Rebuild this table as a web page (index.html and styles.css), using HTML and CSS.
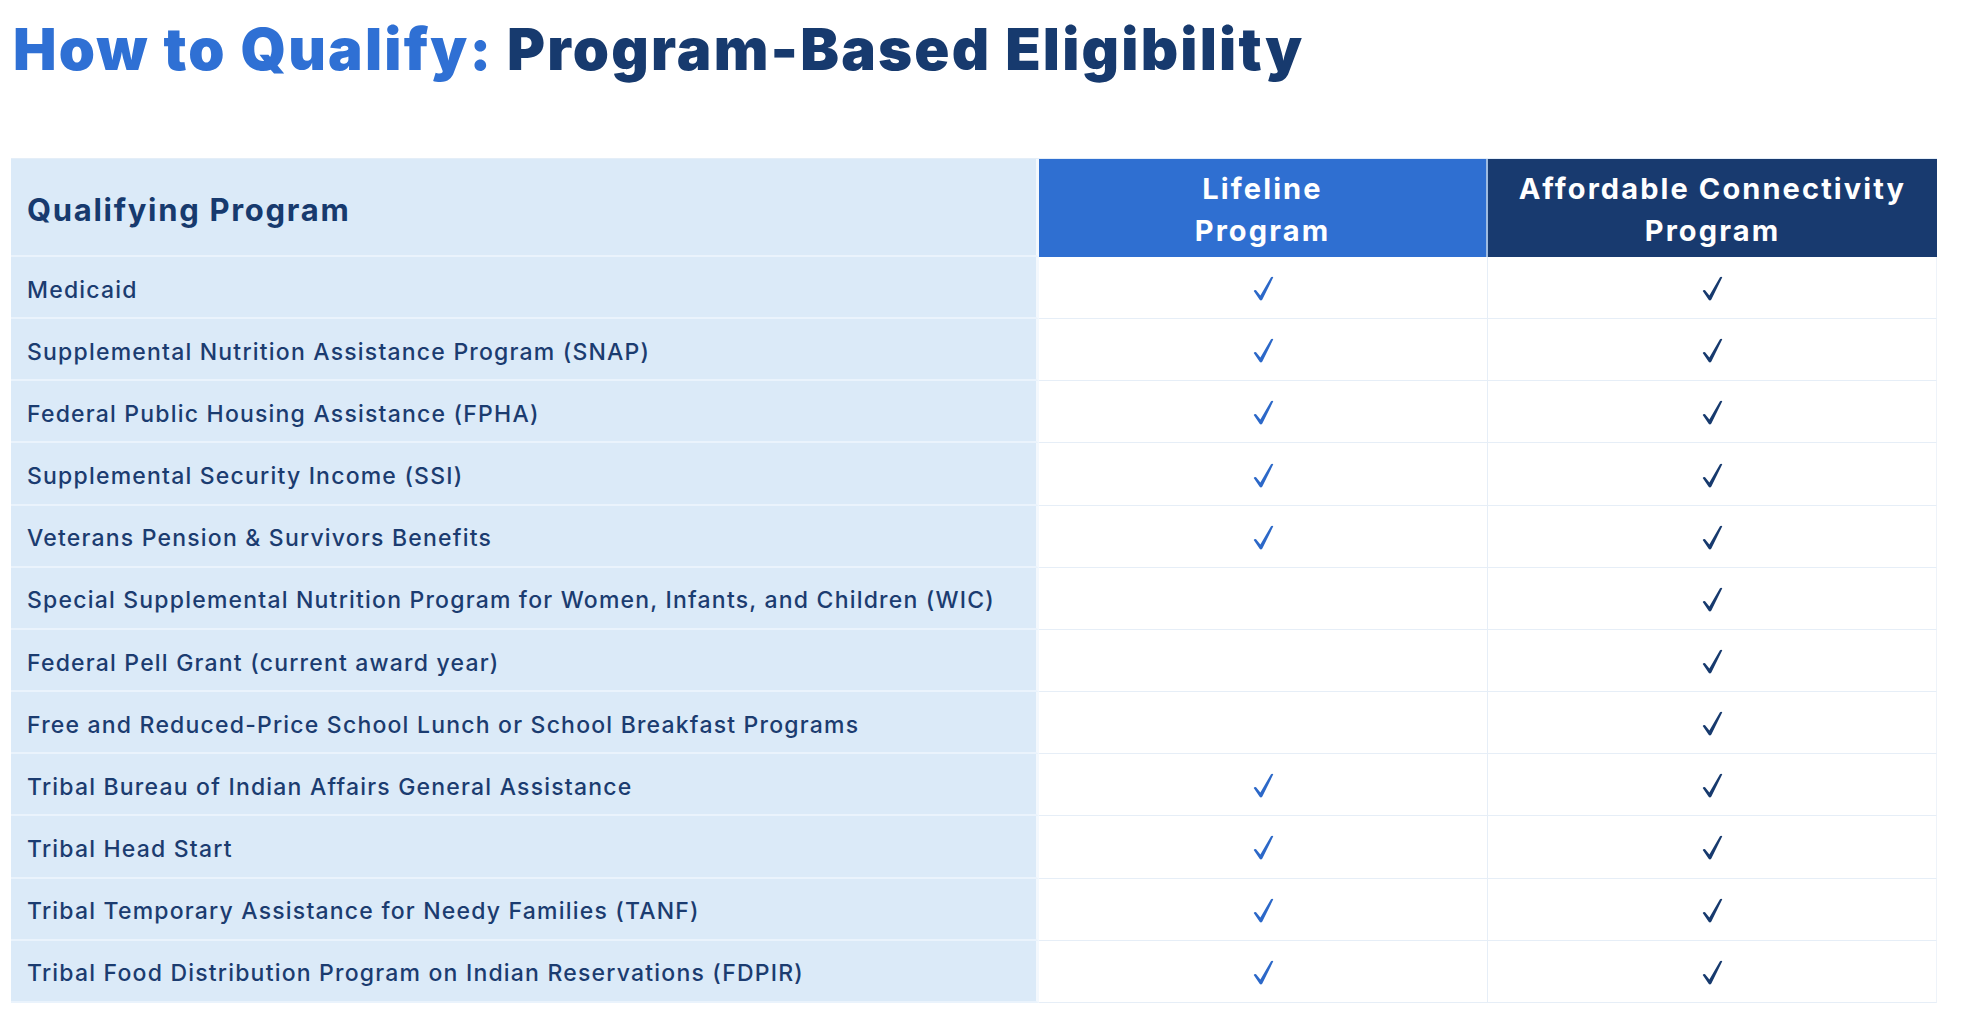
FILE: index.html
```html
<!DOCTYPE html>
<html lang="en">
<head>
<meta charset="utf-8">
<title>How to Qualify: Program-Based Eligibility</title>
<link rel="stylesheet" href="styles.css">
</head>
<body>
<main class="page">
  <h1 class="title"><span class="title-accent">How to Qualify:</span> Program-Based Eligibility</h1>
  <div class="table">
    <div class="cell head-prog">Qualifying Program</div>
    <div class="cell head-life">Lifeline<br>Program</div>
    <div class="cell head-acp">Affordable Connectivity<br>Program</div>

    <div class="cell prog">Medicaid</div>
    <div class="cell mark life"><svg class="check" viewBox="0 0 20 24"><path d="M0.6 14.4 Q1.4 12.9 2.9 13.6 L7 18.6 L17.2 1.2 Q18.4 0.2 19.4 1.3 L8.9 22.6 Q7.7 24.2 6.3 22.9 Z"/></svg></div>
    <div class="cell mark acp"><svg class="check" viewBox="0 0 20 24"><path d="M0.6 14.4 Q1.4 12.9 2.9 13.6 L7 18.6 L17.2 1.2 Q18.4 0.2 19.4 1.3 L8.9 22.6 Q7.7 24.2 6.3 22.9 Z"/></svg></div>

    <div class="cell prog">Supplemental Nutrition Assistance Program (SNAP)</div>
    <div class="cell mark life"><svg class="check" viewBox="0 0 20 24"><path d="M0.6 14.4 Q1.4 12.9 2.9 13.6 L7 18.6 L17.2 1.2 Q18.4 0.2 19.4 1.3 L8.9 22.6 Q7.7 24.2 6.3 22.9 Z"/></svg></div>
    <div class="cell mark acp"><svg class="check" viewBox="0 0 20 24"><path d="M0.6 14.4 Q1.4 12.9 2.9 13.6 L7 18.6 L17.2 1.2 Q18.4 0.2 19.4 1.3 L8.9 22.6 Q7.7 24.2 6.3 22.9 Z"/></svg></div>

    <div class="cell prog">Federal Public Housing Assistance (FPHA)</div>
    <div class="cell mark life"><svg class="check" viewBox="0 0 20 24"><path d="M0.6 14.4 Q1.4 12.9 2.9 13.6 L7 18.6 L17.2 1.2 Q18.4 0.2 19.4 1.3 L8.9 22.6 Q7.7 24.2 6.3 22.9 Z"/></svg></div>
    <div class="cell mark acp"><svg class="check" viewBox="0 0 20 24"><path d="M0.6 14.4 Q1.4 12.9 2.9 13.6 L7 18.6 L17.2 1.2 Q18.4 0.2 19.4 1.3 L8.9 22.6 Q7.7 24.2 6.3 22.9 Z"/></svg></div>

    <div class="cell prog">Supplemental Security Income (SSI)</div>
    <div class="cell mark life"><svg class="check" viewBox="0 0 20 24"><path d="M0.6 14.4 Q1.4 12.9 2.9 13.6 L7 18.6 L17.2 1.2 Q18.4 0.2 19.4 1.3 L8.9 22.6 Q7.7 24.2 6.3 22.9 Z"/></svg></div>
    <div class="cell mark acp"><svg class="check" viewBox="0 0 20 24"><path d="M0.6 14.4 Q1.4 12.9 2.9 13.6 L7 18.6 L17.2 1.2 Q18.4 0.2 19.4 1.3 L8.9 22.6 Q7.7 24.2 6.3 22.9 Z"/></svg></div>

    <div class="cell prog">Veterans Pension &amp; Survivors Benefits</div>
    <div class="cell mark life"><svg class="check" viewBox="0 0 20 24"><path d="M0.6 14.4 Q1.4 12.9 2.9 13.6 L7 18.6 L17.2 1.2 Q18.4 0.2 19.4 1.3 L8.9 22.6 Q7.7 24.2 6.3 22.9 Z"/></svg></div>
    <div class="cell mark acp"><svg class="check" viewBox="0 0 20 24"><path d="M0.6 14.4 Q1.4 12.9 2.9 13.6 L7 18.6 L17.2 1.2 Q18.4 0.2 19.4 1.3 L8.9 22.6 Q7.7 24.2 6.3 22.9 Z"/></svg></div>

    <div class="cell prog">Special Supplemental Nutrition Program for Women, Infants, and Children (WIC)</div>
    <div class="cell mark life"></div>
    <div class="cell mark acp"><svg class="check" viewBox="0 0 20 24"><path d="M0.6 14.4 Q1.4 12.9 2.9 13.6 L7 18.6 L17.2 1.2 Q18.4 0.2 19.4 1.3 L8.9 22.6 Q7.7 24.2 6.3 22.9 Z"/></svg></div>

    <div class="cell prog">Federal Pell Grant (current award year)</div>
    <div class="cell mark life"></div>
    <div class="cell mark acp"><svg class="check" viewBox="0 0 20 24"><path d="M0.6 14.4 Q1.4 12.9 2.9 13.6 L7 18.6 L17.2 1.2 Q18.4 0.2 19.4 1.3 L8.9 22.6 Q7.7 24.2 6.3 22.9 Z"/></svg></div>

    <div class="cell prog">Free and Reduced-Price School Lunch or School Breakfast Programs</div>
    <div class="cell mark life"></div>
    <div class="cell mark acp"><svg class="check" viewBox="0 0 20 24"><path d="M0.6 14.4 Q1.4 12.9 2.9 13.6 L7 18.6 L17.2 1.2 Q18.4 0.2 19.4 1.3 L8.9 22.6 Q7.7 24.2 6.3 22.9 Z"/></svg></div>

    <div class="cell prog">Tribal Bureau of Indian Affairs General Assistance</div>
    <div class="cell mark life"><svg class="check" viewBox="0 0 20 24"><path d="M0.6 14.4 Q1.4 12.9 2.9 13.6 L7 18.6 L17.2 1.2 Q18.4 0.2 19.4 1.3 L8.9 22.6 Q7.7 24.2 6.3 22.9 Z"/></svg></div>
    <div class="cell mark acp"><svg class="check" viewBox="0 0 20 24"><path d="M0.6 14.4 Q1.4 12.9 2.9 13.6 L7 18.6 L17.2 1.2 Q18.4 0.2 19.4 1.3 L8.9 22.6 Q7.7 24.2 6.3 22.9 Z"/></svg></div>

    <div class="cell prog">Tribal Head Start</div>
    <div class="cell mark life"><svg class="check" viewBox="0 0 20 24"><path d="M0.6 14.4 Q1.4 12.9 2.9 13.6 L7 18.6 L17.2 1.2 Q18.4 0.2 19.4 1.3 L8.9 22.6 Q7.7 24.2 6.3 22.9 Z"/></svg></div>
    <div class="cell mark acp"><svg class="check" viewBox="0 0 20 24"><path d="M0.6 14.4 Q1.4 12.9 2.9 13.6 L7 18.6 L17.2 1.2 Q18.4 0.2 19.4 1.3 L8.9 22.6 Q7.7 24.2 6.3 22.9 Z"/></svg></div>

    <div class="cell prog">Tribal Temporary Assistance for Needy Families (TANF)</div>
    <div class="cell mark life"><svg class="check" viewBox="0 0 20 24"><path d="M0.6 14.4 Q1.4 12.9 2.9 13.6 L7 18.6 L17.2 1.2 Q18.4 0.2 19.4 1.3 L8.9 22.6 Q7.7 24.2 6.3 22.9 Z"/></svg></div>
    <div class="cell mark acp"><svg class="check" viewBox="0 0 20 24"><path d="M0.6 14.4 Q1.4 12.9 2.9 13.6 L7 18.6 L17.2 1.2 Q18.4 0.2 19.4 1.3 L8.9 22.6 Q7.7 24.2 6.3 22.9 Z"/></svg></div>

    <div class="cell prog">Tribal Food Distribution Program on Indian Reservations (FDPIR)</div>
    <div class="cell mark life"><svg class="check" viewBox="0 0 20 24"><path d="M0.6 14.4 Q1.4 12.9 2.9 13.6 L7 18.6 L17.2 1.2 Q18.4 0.2 19.4 1.3 L8.9 22.6 Q7.7 24.2 6.3 22.9 Z"/></svg></div>
    <div class="cell mark acp"><svg class="check" viewBox="0 0 20 24"><path d="M0.6 14.4 Q1.4 12.9 2.9 13.6 L7 18.6 L17.2 1.2 Q18.4 0.2 19.4 1.3 L8.9 22.6 Q7.7 24.2 6.3 22.9 Z"/></svg></div>
  </div>
</main>
</body>
</html>
```

FILE: styles.css
```css
html, body {
  margin: 0;
  padding: 0;
  background: #ffffff;
}

body {
  font-family: Inter, "Open Sans", "Liberation Sans", sans-serif;
  color: #1b3c70;
}

.page {
  padding: 14px 31px 0 11px;
}

.title {
  margin: 0 0 74px 2px;
  font-size: 58px;
  line-height: 70px;
  font-weight: 900;
  color: #173a6e;
  letter-spacing: 2.2px;
  white-space: nowrap;
}

.title-accent {
  color: #2f70d4;
}

.table {
  display: grid;
  grid-template-columns: 1028px 449px 449px;
  grid-template-rows: 98px repeat(12, 62.17px);
  border-top: 1px solid #e4eef8;
}

.cell {
  box-sizing: border-box;
  display: flex;
  align-items: center;
}

.head-prog {
  background: #dbeaf8;
  padding: 5px 0 0 16px;
  font-size: 31px;
  font-weight: 700;
  color: #173a6e;
  letter-spacing: 1.7px;
  border-bottom: 2px solid #eaf3fc;
  border-right: 3px solid #f3f8fd;
}

.head-life,
.head-acp {
  justify-content: center;
  text-align: center;
  color: #ffffff;
  font-size: 29px;
  font-weight: 700;
  line-height: 42px;
  letter-spacing: 2.1px;
  padding-top: 3px;
}

.head-life {
  background: #2f6fd1;
  border-right: 2px solid #9fbbe0;
}

.head-acp {
  background: #183a6f;
}

.prog {
  background: #dbeaf8;
  padding: 5px 0 0 16px;
  font-size: 23px;
  font-weight: 500;
  color: #1b3c70;
  letter-spacing: 1.2px;
  border-bottom: 2px solid #eaf3fc;
  border-right: 3px solid #f3f8fd;
  white-space: nowrap;
}

.mark {
  justify-content: center;
  padding-top: 2px;
  border-bottom: 1px solid #e6eef7;
}

.life {
  border-right: 1px solid #e6eef7;
}

.acp {
  border-right: 1px solid #eef3f9;
}

.check {
  width: 21px;
  height: 25px;
}

.life .check {
  fill: #2c68c8;
}

.acp .check {
  fill: #173a6e;
}
```
